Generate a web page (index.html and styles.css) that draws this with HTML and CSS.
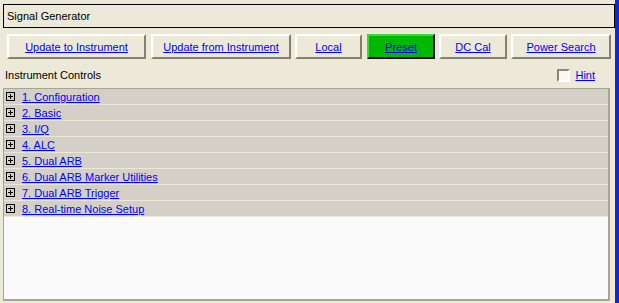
FILE: index.html
```html
<!DOCTYPE html>
<html lang="en">
<head>
    <meta charset="UTF-8">
    <title>Signal Generator</title>
    <link rel="stylesheet" href="styles.css">
</head>
<body>
<div class="window">
    <div class="main">
        <div class="title-box">Signal Generator</div>
        <div class="toolbar">
            <button class="btn w1"><a href="#">Update to Instrument</a></button>
            <button class="btn w2"><a href="#">Update from Instrument</a></button>
            <button class="btn w3"><a href="#">Local</a></button>
            <button class="btn btn-green w4"><a href="#">Preset</a></button>
            <button class="btn w5"><a href="#">DC Cal</a></button>
            <button class="btn w6"><a href="#">Power Search</a></button>
        </div>
        <div class="label-row">
            <span class="label">Instrument Controls</span>
            <span class="hint"><span class="check"></span><a href="#">Hint</a></span>
        </div>
        <div class="tree">
            <ul class="tree-list">
                <li class="tree-item"><span class="plus"></span><a href="#">1. Configuration</a></li>
                <li class="tree-item"><span class="plus"></span><a href="#">2. Basic</a></li>
                <li class="tree-item"><span class="plus"></span><a href="#">3. I/Q</a></li>
                <li class="tree-item"><span class="plus"></span><a href="#">4. ALC</a></li>
                <li class="tree-item"><span class="plus"></span><a href="#">5. Dual ARB</a></li>
                <li class="tree-item"><span class="plus"></span><a href="#">6. Dual ARB Marker Utilities</a></li>
                <li class="tree-item"><span class="plus"></span><a href="#">7. Dual ARB Trigger</a></li>
                <li class="tree-item"><span class="plus"></span><a href="#">8. Real-time Noise Setup</a></li>
            </ul>
        </div>
    </div>
    <div class="stripe"></div>
</div>
</body>
</html>
```

FILE: styles.css
```css
*{
    padding: 0 0;
    margin: 0 0;
    box-sizing: border-box;
}
ul,li{
    list-style: none;
}
body{
    background: #ece9d8;
    font-family: "Liberation Sans", Arial, sans-serif;
    font-size: 11px;
    color: #000;
}
a{
    color: #0000ff;
    text-decoration: underline;
}
.window{
    display: flex;
    width: 619px;
    height: 303px;
}
.main{
    flex: 1;
    display: flex;
    flex-direction: column;
}
.stripe{
    width: 4px;
    background: #0a2bd0;
}
.title-box{
    margin: 4px 0 0 3px;
    height: 24px;
    border: 1px solid #000;
    padding: 0 0 0 3px;
    line-height: 22px;
}
.toolbar{
    display: flex;
    gap: 4px;
    margin: 6px 0 0 7px;
    height: 25px;
}
.btn{
    height: 25px;
    background: #ece9d8;
    border: 2px solid;
    border-color: #fff #838071 #838071 #fff;
    font-family: inherit;
    font-size: 11px;
    padding: 0;
}
.btn-green{
    background: #00b800;
    border-color: #3ada3a #000 #000 #3ada3a;
}
.btn-green a{
    color: #0000dd;
}
.w1{ width: 139px; margin-right: 1px; }
.w2{ width: 140px; }
.w3{ width: 67px; margin-right: 1px; }
.w4{ width: 68px; }
.w5{ width: 68px; }
.w6{ width: 100px; }
.label-row{
    display: flex;
    justify-content: space-between;
    align-items: center;
    height: 18px;
    margin: 7px 0 0 0;
    padding: 0 20px 0 5px;
}
.hint{
    display: flex;
    align-items: center;
    gap: 5px;
}
.check{
    width: 13px;
    height: 13px;
    background: #f8f8f4;
    border: 2px solid;
    border-color: #8c897a #fff #fff #8c897a;
}
.tree{
    margin: 4px 5px 2px 3px;
    flex: 1;
    border: 1px solid #a7a496;
    border-right-width: 2px;
    border-bottom-width: 2px;
    background: #fafafa;
}
.tree-item{
    display: flex;
    align-items: center;
    height: 16px;
    background: #d4d0c8;
    border-bottom: 1px solid #ece9d8;
    padding-left: 2px;
}
.plus{
    position: relative;
    width: 9px;
    height: 9px;
    border: 1px solid #000;
    margin-right: 7px;
    background: #d4d0c8;
}
.plus::before{
    content: "";
    position: absolute;
    left: 1px;
    top: 3px;
    width: 5px;
    height: 1px;
    background: #000;
}
.plus::after{
    content: "";
    position: absolute;
    left: 3px;
    top: 1px;
    width: 1px;
    height: 5px;
    background: #000;
}
```
